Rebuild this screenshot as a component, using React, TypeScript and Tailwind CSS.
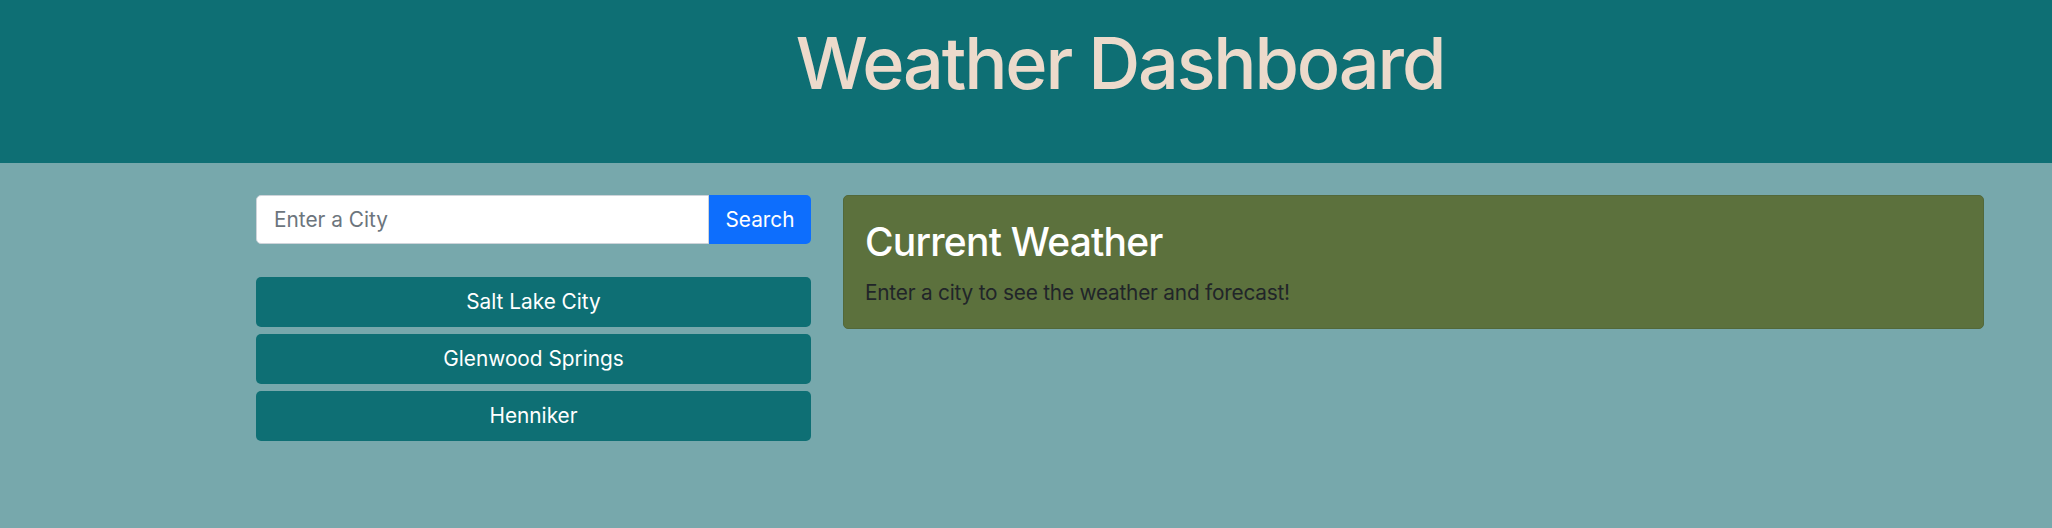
import { useState } from "react";

const cities = ["Salt Lake City", "Glenwood Springs", "Henniker"];

export default function App() {
  const [query, setQuery] = useState("");

  return (
    <div className="min-h-[528px] bg-[#77a8ac] font-['Inter','Noto_Sans',sans-serif]">
      <header className="h-[163px] bg-[#0e6f74] pl-[256px] pr-[68px] pt-[27px]">
        <h1 className="text-center text-[72px] font-medium leading-none tracking-[-0.03em] text-[#ecdacb]">
          Weather Dashboard
        </h1>
      </header>

      <main className="flex gap-[32px] pl-[256px] pr-[68px] pt-[32px]">
        <aside className="w-[555px] shrink-0">
          <div className="flex h-[49px]">
            <input
              value={query}
              onChange={(e) => setQuery(e.target.value)}
              placeholder="Enter a City"
              className="min-w-0 flex-1 rounded-l-[5px] border border-[#ced4da] bg-white px-[17px] text-[20.8px] text-[#495057] outline-none placeholder:text-[#6c757d]"
            />
            <button className="w-[102px] rounded-r-[5px] bg-[#0d6efd] text-[20.8px] text-white">
              Search
            </button>
          </div>

          <ul className="mt-[33px] flex flex-col gap-[7px]">
            {cities.map((c) => (
              <li key={c}>
                <button className="h-[50px] w-full rounded-[5px] bg-[#0e6f74] text-[20.8px] text-white">
                  {c}
                </button>
              </li>
            ))}
          </ul>
        </aside>

        <section className="flex-1">
          <div className="rounded-[5px] border border-[#52683a] bg-[#5c713d] px-[21px] pt-[21px] pb-[20px]">
            <h2 className="mb-[10px] text-[39px] font-medium leading-[50px] tracking-[-0.02em] text-white">
              Current Weather
            </h2>
            <p className="text-[20.8px] leading-[1.5] tracking-[-0.01em] text-[#212529]">
              Enter a city to see the weather and forecast!
            </p>
          </div>
        </section>
      </main>
    </div>
  );
}
